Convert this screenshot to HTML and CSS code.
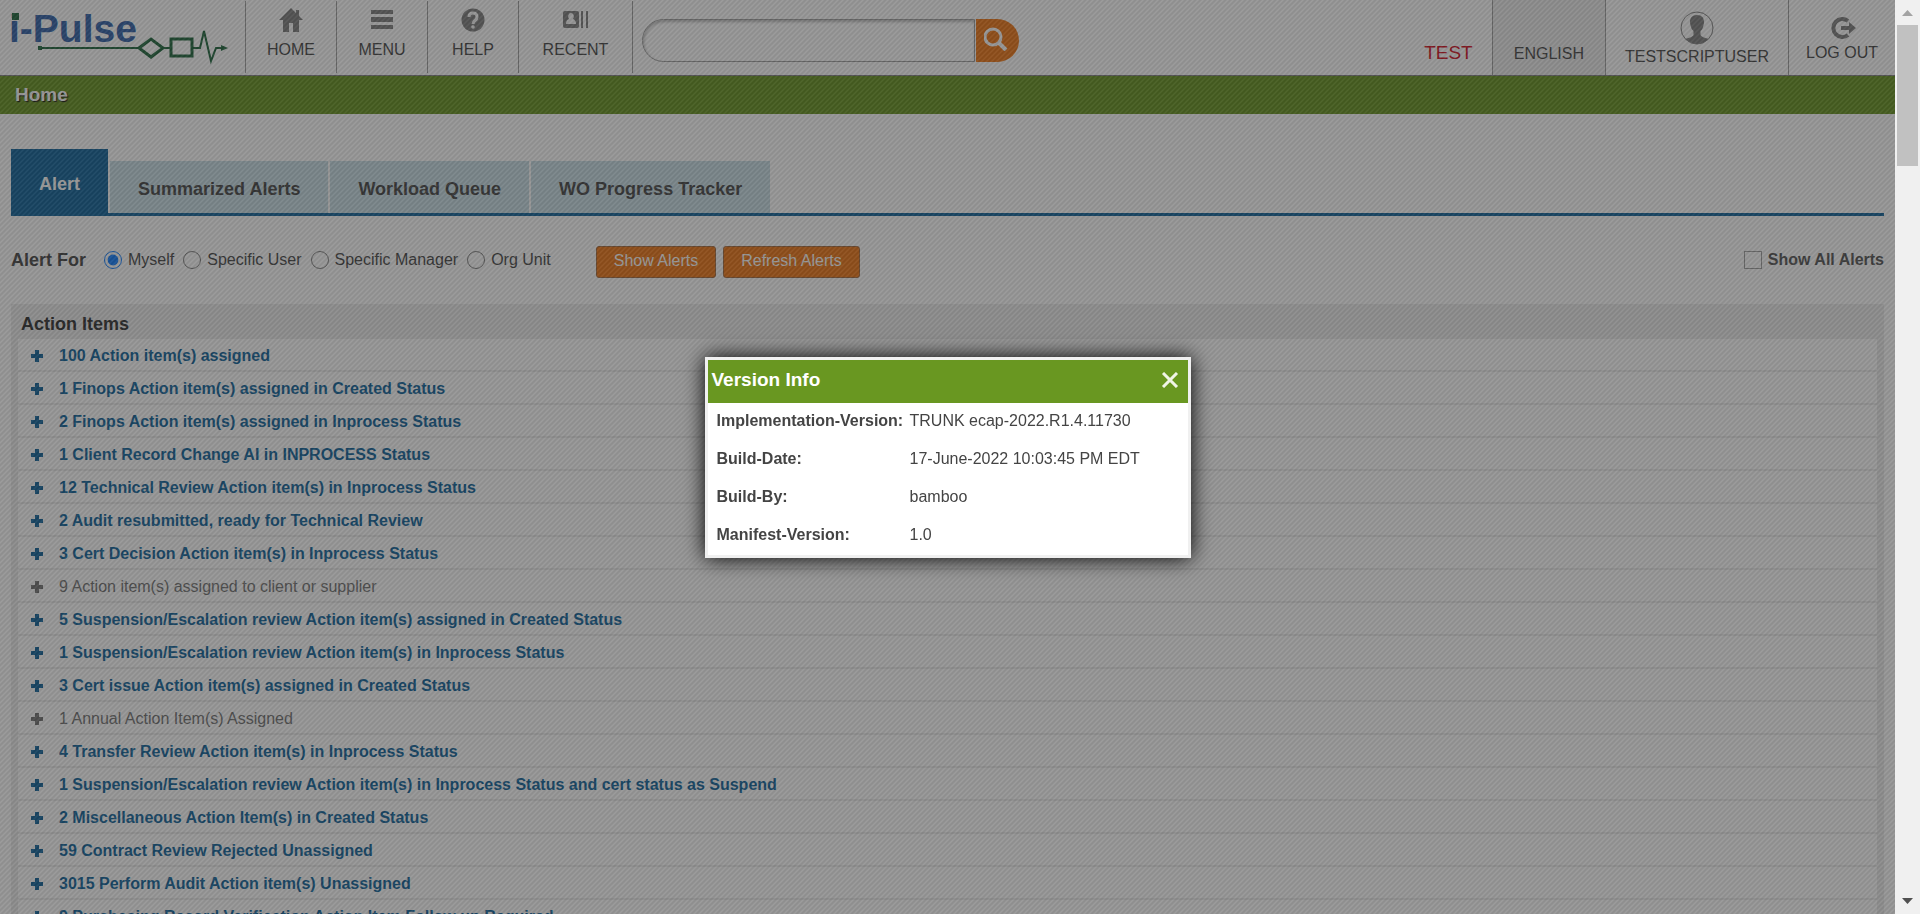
FILE: index.html
```html
<!DOCTYPE html>
<html lang="en">
<head>
<meta charset="utf-8">
<title>i-Pulse - Home</title>
<link rel="stylesheet" href="styles.css">
</head>
<body>
<div class="viewport">
  <div class="page">
    <header class="topbar">
      <a class="logo" href="#" aria-label="i-Pulse">
        <svg width="234" height="75" viewBox="0 0 234 75" aria-hidden="true">
          <text class="logo-text" x="9" y="42">i-Pulse</text>
          <path d="M12 13h7v7h-7z" fill="#0f5b2f"/>
          <path d="M38 46h4v4h-4z" fill="#0f5b2f"/>
          <path d="M40 48H139M163 48h8M193 48h7l4-17 7 30 5-13h7" fill="none" stroke="#0f5b2f" stroke-width="2"/>
          <path d="M139 48l12-9 12 9-12 9zM171 39h21v17h-21z" fill="none" stroke="#0f5b2f" stroke-width="3"/>
          <path d="M221 45l7 3-7 3z" fill="#0f5b2f"/>
        </svg>
      </a>
      <nav class="nav">
        <a href="#" class="nav-item">
          <svg width="24" height="24" viewBox="0 0 24 24"><path d="M12 0L0 12h4v12h6v-9h4v9h6V12h4l-4-4V2h-3v3z"/></svg>
          <span>HOME</span></a>
        <a href="#" class="nav-item">
          <svg width="24" height="24" viewBox="0 0 24 24"><path d="M1 2h22v4H1zM1 9h22v5H1zM1 17h22v4H1z"/></svg>
          <span>MENU</span></a>
        <a href="#" class="nav-item">
          <svg width="24" height="24" viewBox="0 0 24 24"><circle cx="12" cy="12" r="11.500"/><path class="cut" d="M8 9q0-4 4-4t4 4q0 2-2 3.500t-2 3.500"/><circle class="cut-dot" cx="12" cy="19" r="1.800"/></svg>
          <span>HELP</span></a>
        <a href="#" class="nav-item nav-item-wide">
          <svg width="26" height="24" viewBox="0 0 26 24"><path fill-rule="evenodd" d="M2 3h12a2 2 0 0 1 2 2v13a2 2 0 0 1-2 2H2a2 2 0 0 1-2-2V5a2 2 0 0 1 2-2zM8 5a3 3.500 0 0 0-2 6q-3 1-3 5h10q0-4-3-5a3 3.500 0 0 0-2-6zM18 3h2v17h-2zM23 3h2v17h-2z"/></svg>
          <span>RECENT</span></a>
      </nav>
      <form class="search">
        <input class="search-box" type="text" aria-label="Search">
        <button class="search-btn" type="button" aria-label="Run search">
          <svg width="24" height="24" viewBox="0 0 24 24"><circle cx="9" cy="10" r="8"/><path d="M15 16l7 7" stroke-width="4"/></svg>
        </button>
      </form>
      <div class="account">
        <span class="env">TEST</span>
        <button class="lang" type="button">ENGLISH</button>
        <a href="#" class="user">
          <svg width="34" height="34" viewBox="0 0 34 34"><circle cx="17" cy="17" r="16" fill="none" stroke="#777"/><path d="M17 4c-5 0-7 3-7 7 0 1 0 2 .5 3 .5 3 1.500 5 3 6v4c-1 2-5 3-8 4a16 16 0 0 0 23 0c-3-1-7-2-8-4v-4c1.500-1 2.500-3 3-6 .5-1 .5-2 .5-3 0-4-2-7-7-7z"/></svg>
          <span>TESTSCRIPTUSER</span></a>
        <a href="#" class="logout">
          <svg width="30" height="26" viewBox="0 0 30 26"><path d="M21 6A9 9 0 1 0 21 20" fill="none" stroke="#777" stroke-width="4"/><path d="M14 11h8V7l7 6-7 6v-4h-8z"/></svg>
          <span>LOG OUT</span></a>
      </div>
    </header>
    <h1 class="crumb">Home</h1>
    <main class="content">
      <div class="tabs" role="tablist">
        <button class="tab tab-active" type="button" role="tab" aria-selected="true">Alert</button>
        <button class="tab" type="button" role="tab">Summarized Alerts</button>
        <button class="tab" type="button" role="tab">Workload Queue</button>
        <button class="tab" type="button" role="tab">WO Progress Tracker</button>
      </div>
      <form class="filters">
        <strong class="filters-title">Alert For</strong>
        <label class="choice"><input type="radio" name="for" checked>Myself</label>
        <label class="choice"><input type="radio" name="for">Specific User</label>
        <label class="choice"><input type="radio" name="for">Specific Manager</label>
        <label class="choice"><input type="radio" name="for">Org Unit</label>
        <div class="actions">
          <button class="btn" type="button">Show Alerts</button>
          <button class="btn" type="button">Refresh Alerts</button>
        </div>
        <label class="choice show-all"><input type="checkbox">Show All Alerts</label>
      </form>
      <section class="panel">
        <h2 class="panel-title">Action Items</h2>
        <ul class="items">
          <li><a href="#">100 Action item(s) assigned</a></li>
          <li><a href="#">1 Finops Action item(s) assigned in Created Status</a></li>
          <li><a href="#">2 Finops Action item(s) assigned in Inprocess Status</a></li>
          <li><a href="#">1 Client Record Change AI in INPROCESS Status</a></li>
          <li><a href="#">12 Technical Review Action item(s) in Inprocess Status</a></li>
          <li><a href="#">2 Audit resubmitted, ready for Technical Review</a></li>
          <li><a href="#">3 Cert Decision Action item(s) in Inprocess Status</a></li>
          <li class="muted"><a href="#">9 Action item(s) assigned to client or supplier</a></li>
          <li><a href="#">5 Suspension/Escalation review Action item(s) assigned in Created Status</a></li>
          <li><a href="#">1 Suspension/Escalation review Action item(s) in Inprocess Status</a></li>
          <li><a href="#">3 Cert issue Action item(s) assigned in Created Status</a></li>
          <li class="muted"><a href="#">1 Annual Action Item(s) Assigned</a></li>
          <li><a href="#">4 Transfer Review Action item(s) in Inprocess Status</a></li>
          <li><a href="#">1 Suspension/Escalation review Action item(s) in Inprocess Status and cert status as Suspend</a></li>
          <li><a href="#">2 Miscellaneous Action Item(s) in Created Status</a></li>
          <li><a href="#">59 Contract Review Rejected Unassigned</a></li>
          <li><a href="#">3015 Perform Audit Action item(s) Unassigned</a></li>
          <li><a href="#">9 Purchasing Record Verification Action Item Follow up Required</a></li>
        </ul>
      </section>
    </main>
  </div>
  <div class="scrollbar" aria-hidden="true">
    <svg width="11" height="6" viewBox="0 0 11 6"><path d="M0 6l5.500-6L11 6z" fill="#a3a3a3"/></svg>
    <div class="thumb"></div>
    <svg width="11" height="6" viewBox="0 0 11 6"><path d="M0 0h11L5.500 6z" fill="#505050"/></svg>
  </div>
</div>
<div class="overlay">
  <section class="dialog" role="dialog" aria-labelledby="dialog-title">
    <header class="dialog-head">
      <h2 id="dialog-title">Version Info</h2>
      <button class="close" type="button" aria-label="Close">
        <svg width="18" height="16" viewBox="0 0 18 16"><path d="M2 1l14 14M16 1L2 15" stroke="#f0f5e6" stroke-width="3"/></svg>
      </button>
    </header>
    <table class="info">
      <tr><th scope="row">Implementation-Version:</th><td>TRUNK ecap-2022.R1.4.11730</td></tr>
      <tr><th scope="row">Build-Date:</th><td>17-June-2022 10:03:45 PM EDT</td></tr>
      <tr><th scope="row">Build-By:</th><td>bamboo</td></tr>
      <tr><th scope="row">Manifest-Version:</th><td>1.0</td></tr>
    </table>
  </section>
</div>
</body>
</html>
```

FILE: styles.css
```css
* { box-sizing: border-box; }

body {
  margin: 0;
  font: 16px/20px "Liberation Sans", Arial, sans-serif;
  color: #3a3a3a;
}

button, input { font: inherit; color: inherit; }
a { color: inherit; text-decoration: none; }

.viewport { display: flex; height: 100vh; overflow: hidden; }
.page { flex: 1; min-width: 0; overflow: hidden; background: #fff; }

/* Top bar */
.topbar {
  display: flex;
  height: 76px;
  border-bottom: 1px solid #777;
}
.logo { width: 245px; flex: none; }
.logo-text { font: bold 39px "Liberation Sans", Arial, sans-serif; fill: #2458a4; }
.nav { display: flex; padding: 1px 0 2px; }
.nav-item {
  display: flex;
  flex-direction: column;
  align-items: center;
  gap: 8px;
  min-width: 91px;
  padding: 7px 21px 0;
  border-left: 1px solid #999;
}
.nav-item-wide { min-width: 115px; border-right: 1px solid #999; }
.nav-item svg, .user svg, .logout svg { fill: #777; }
.nav-item .cut { fill: none; stroke: #fff; stroke-width: 3; }
.nav-item .cut-dot { fill: #fff; }

.search { display: flex; gap: 1px; padding: 19px 0 0 9px; }
.search-box {
  width: 333px;
  height: 43px;
  padding: 0 20px;
  border: 1px solid #999;
  border-radius: 22px 0 0 22px;
  background: #fff;
  box-shadow: inset 1px 2px 3px #bbb;
}
.search-btn {
  width: 43px;
  height: 43px;
  padding: 0 4px 4px 0;
  border: 0;
  border-radius: 0 22px 22px 0;
  background: #f07008;
}
.search-btn svg { fill: none; stroke: #fff; stroke-width: 3; vertical-align: middle; }

.account { display: flex; margin-left: auto; text-align: center; }
.env { padding: 43px 19px 0; font-size: 19px; color: #d00010; }
.lang {
  padding: 32px 21px 0;
  border: solid #999;
  border-width: 0 1px;
  background: #ececec;
}
.user, .logout { display: flex; flex-direction: column; align-items: center; }
.user { gap: 2px; padding: 11px 19px 0; }
.logout { gap: 2px; padding: 15px 17px 0; border-left: 1px solid #999; }

.crumb {
  margin: 0;
  padding: 8px 15px;
  background: #5f8c12;
  color: #fff;
  font-size: 19px;
  line-height: 22px;
  text-shadow: 1px 1px 1px #000;
}

/* Tabs */
.content { padding: 35px 11px 0; }
.tabs {
  display: flex;
  align-items: flex-end;
  gap: 2px;
  border-bottom: 3px solid #005a96;
}
.tab {
  height: 52px;
  padding: 3px 28px 0;
  border: 0;
  background: #c6dde6;
  font-size: 18px;
  font-weight: bold;
}
.tab-active { height: 64px; padding: 6px 28px 0; background: #005a96; color: #fff; }

/* Filters */
.filters { display: flex; align-items: center; gap: 9px; padding: 30px 0 26px; }
.filters-title { margin: 0 9px 4px 0; font-size: 18px; }
.choice { display: flex; align-items: center; gap: 6px; margin-bottom: 4px; }
.choice input { width: 18px; height: 18px; margin: 0; }
.actions { display: flex; gap: 7px; margin-left: 36px; }
.btn {
  height: 32px;
  padding: 0 17px 2px;
  border: 1px solid #a06030;
  border-radius: 3px;
  background: #f07008;
  color: #fff;
}
.show-all { margin-left: auto; color: #4a4a4a; font-weight: bold; }
.show-all input {
  appearance: none;
  border: 1px solid #999;
}

/* Action items */
.panel { padding: 9px 7px; background: #ececec; }
.panel-title {
  margin: 0;
  padding: 0 3px 4px;
  font-size: 18px;
  line-height: 22px;
  color: #222;
}
.items { margin: 0; padding: 0; list-style: none; background: #fff; }
.items li {
  height: 33px;
  padding: 7px 13px 0;
  border-bottom: 2px solid #ececec;
  color: #005a96;
  font-weight: bold;
}
.items a { display: flex; align-items: center; gap: 16px; }
.items a::before {
  content: "";
  width: 12px;
  height: 12px;
  background:
    linear-gradient(currentColor, currentColor) center / 12px 4px no-repeat,
    linear-gradient(currentColor, currentColor) center / 4px 12px no-repeat;
}
.items .muted { color: #6a6a6a; font-weight: normal; }

/* Window scrollbar */
.scrollbar {
  display: flex;
  flex-direction: column;
  align-items: center;
  width: 25px;
  padding: 10px 0;
  background: #f0f0f0;
}
.thumb { width: 21px; height: 141px; margin: 9px 0 auto; background: #c1c1c1; }

/* Modal */
.overlay {
  position: fixed;
  inset: 0 25px 0 0;
  display: grid;
  place-items: center;
  background:
    linear-gradient(135deg, #2c2c2c87 10%, #44444487 30%, #2c2c2c87 50%, #2c2c2c87 60%, #44444487 80%, #2c2c2c87) 0 0 / 5px 5px;
}
.dialog {
  width: 486px;
  border: 3px solid #f0f0f0;
  background: #fff;
  box-shadow: 0 0 20px #000;
}
.dialog-head {
  display: flex;
  justify-content: space-between;
  padding: 9px 9px 12px 4px;
  background: #699721;
  color: #fff;
}
.dialog-head h2 { margin: 0; font-size: 19px; line-height: 22px; }
.close { padding: 0; border: 0; background: none; line-height: 0; }
.info { margin: 0 9px; border-collapse: collapse; color: #444; }
.info th, .info td { height: 38px; padding: 0 0 2px; text-align: left; }
.info th { width: 193px; }
```
